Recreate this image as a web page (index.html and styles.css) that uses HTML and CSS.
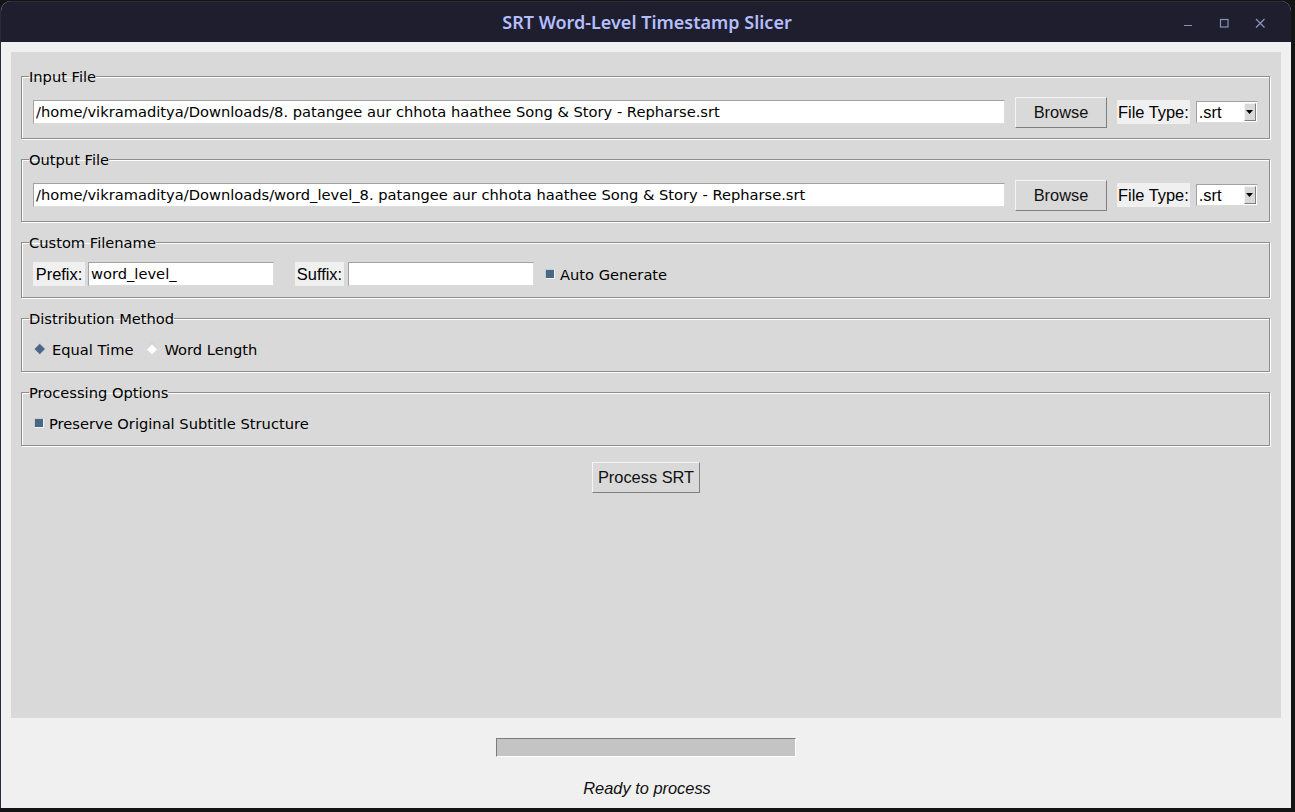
FILE: index.html
```html
<!DOCTYPE html>
<html>
<head>
<meta charset="utf-8">
<title>SRT Word-Level Timestamp Slicer</title>
<link rel="stylesheet" href="styles.css">
</head>
<body>
<div class="window">
  <div class="titlebar">
    <div class="title">SRT Word-Level Timestamp Slicer</div>
    <div class="controls">
      <svg class="ctl" width="12" height="12" viewBox="0 0 12 12"><path d="M2 8.5h8" stroke="#8890b4" stroke-width="1.2"/></svg>
      <svg class="ctl" width="12" height="12" viewBox="0 0 12 12"><rect x="2.5" y="2.5" width="7.5" height="7.5" fill="none" stroke="#8890b4" stroke-width="1.2"/></svg>
      <svg class="ctl" width="12" height="12" viewBox="0 0 12 12"><path d="M2 2l8.5 8.5M10.5 2L2 10.5" stroke="#8890b4" stroke-width="1.3"/></svg>
    </div>
  </div>
  <div class="content">
    <div class="main">
      <fieldset class="group">
        <legend>Input File</legend>
        <div class="row file-row">
          <div class="entry path">/home/vikramaditya/Downloads/8. patangee aur chhota haathee Song &amp; Story - Repharse.srt</div>
          <div class="button browse">Browse</div>
          <div class="tklabel ftype">File Type:</div>
          <div class="combo"><span class="combo-text">.srt</span><span class="combo-arrow"><svg width="7" height="4" viewBox="0 0 7 4"><path d="M0 0h7L3.5 4z" fill="#000"/></svg></span></div>
        </div>
      </fieldset>
      <fieldset class="group">
        <legend>Output File</legend>
        <div class="row file-row">
          <div class="entry path">/home/vikramaditya/Downloads/word_level_8. patangee aur chhota haathee Song &amp; Story - Repharse.srt</div>
          <div class="button browse">Browse</div>
          <div class="tklabel ftype">File Type:</div>
          <div class="combo"><span class="combo-text">.srt</span><span class="combo-arrow"><svg width="7" height="4" viewBox="0 0 7 4"><path d="M0 0h7L3.5 4z" fill="#000"/></svg></span></div>
        </div>
      </fieldset>
      <fieldset class="group compact">
        <legend>Custom Filename</legend>
        <div class="row name-row">
          <div class="tklabel prefix">Prefix:</div>
          <div class="entry short">word_level_</div>
          <div class="tklabel suffix">Suffix:</div>
          <div class="entry short"></div>
          <div class="check auto"><span class="box"></span><span class="check-text">Auto Generate</span></div>
        </div>
      </fieldset>
      <fieldset class="group compact">
        <legend>Distribution Method</legend>
        <div class="row radio-row">
          <div class="radio"><svg width="12" height="12" viewBox="0 0 12 12"><path d="M6 0.5L11.5 6 6 11.5 0.5 6z" fill="#4a6784"/><path d="M6 0.5L11.5 6 6 11.5" fill="none" stroke="#dfe3e8" stroke-width="0.9"/></svg><span>Equal Time</span></div>
          <div class="radio"><svg width="12" height="12" viewBox="0 0 12 12"><path d="M6 0.5L11.5 6 6 11.5 0.5 6z" fill="#ffffff"/><path d="M0.5 6L6 0.5 11.5 6" fill="none" stroke="#bdbdbd" stroke-width="0.9"/></svg><span>Word Length</span></div>
        </div>
      </fieldset>
      <fieldset class="group compact">
        <legend>Processing Options</legend>
        <div class="row radio-row">
          <div class="check preserve"><span class="box"></span><span class="check-text">Preserve Original Subtitle Structure</span></div>
        </div>
      </fieldset>
      <div class="actions">
        <div class="button process">Process SRT</div>
      </div>
    </div>
    <div class="status">
      <div class="progress"></div>
      <div class="status-text">Ready to process</div>
    </div>
  </div>
</div>
</body>
</html>
```
FILE: styles.css
```css
html, body {
  margin: 0;
  padding: 0;
  background: #141414;
  width: 1295px;
  height: 812px;
  overflow: hidden;
}
body {
  padding: 1px 0 0 1px;
  box-sizing: border-box;
}
.window {
  width: 1290px;
  height: 807px;
  border-radius: 10px 10px 0 0;
  overflow: hidden;
  display: flex;
  flex-direction: column;
  background: #f0f0f0;
  box-shadow: -1px 0 0 #262b3e;
}
.titlebar {
  height: 41px;
  flex: none;
  background: #1e1e2e;
  display: flex;
  align-items: center;
  justify-content: center;
  position: relative;
  box-shadow: inset 0 1px 0 #2c2c3c;
}
.title {
  font-family: "Noto Sans", sans-serif;
  font-weight: 600;
  font-size: 18px;
  color: #b4befe;
  margin-left: 2px;
  margin-top: 1px;
}
.controls {
  position: absolute;
  right: 25px;
  top: 16px;
  display: flex;
  gap: 24px;
}
.ctl { display: block; }
.content {
  flex: 1;
  display: flex;
  flex-direction: column;
  padding: 10px 10px 0 10px;
  font-family: "DejaVu Sans", sans-serif;
  font-size: 14.67px;
  color: #000;
}
.main {
  background: #d9d9d9;
  height: 666px;
  padding: 16px 11px 0 10px;
  box-sizing: border-box;
  display: flex;
  flex-direction: column;
}
.group {
  margin: 0 0 12px 0;
  padding: 12px 11px 10px 11px;
  border: 1px solid #8e8e8e;
  box-shadow: 1px 1px 0 #ffffff, inset 1px 1px 0 #ffffff;
  min-width: 0;
}
.group.compact {
  padding-top: 11px;
  padding-bottom: 11px;
}
.group legend {
  padding: 0;
  margin-left: -4px;
  font-family: "DejaVu Sans", sans-serif;
  font-size: 14.67px;
  line-height: 17px;
  color: #000;
}
.row {
  display: flex;
  align-items: center;
}
.file-row {
  height: 31px;
  align-items: flex-start;
}
.file-row .entry,
.file-row .tklabel { margin-top: 3px; }
.file-row .combo { margin-top: 4px; }
.name-row { height: 24px; }
.radio-row { height: 22px; }
.entry {
  background: #fff;
  border: 1px solid;
  border-color: #a2a2a2 #dcdcdc #dcdcdc #a2a2a2;
  box-sizing: border-box;
  height: 24px;
  line-height: 22px;
  padding: 0 2px;
  font-family: "DejaVu Sans", sans-serif;
  font-size: 14.67px;
  white-space: nowrap;
  overflow: hidden;
  flex: none;
}
.path { width: 972px; }
.short { width: 186px; }
.button {
  font-family: "Liberation Sans", Arial, sans-serif;
  font-size: 16.4px;
  color: #111;
  background: #d9d9d9;
  border: 1px solid;
  border-color: #f4f4f4 #7f7f7f #7f7f7f #f4f4f4;
  box-sizing: border-box;
  display: flex;
  align-items: center;
  justify-content: center;
  flex: none;
}
.browse {
  width: 92px;
  height: 31px;
  margin-left: 10px;
}
.tklabel {
  font-family: "Liberation Sans", Arial, sans-serif;
  font-size: 16.4px;
  background: #f0f0f0;
  height: 24px;
  line-height: 24px;
  padding: 0 2px;
  color: #000;
  flex: none;
  text-align: center;
  box-sizing: border-box;
}
.ftype { margin-left: 10px; padding: 0 1px 0 1px; }
.prefix { width: 52px; padding: 0; margin-right: 3px; }
.suffix { width: 49px; padding: 0; margin-left: 21px; margin-right: 4px; }
.combo {
  margin-left: 6px;
  width: 62px;
  height: 22px;
  background: #fff;
  border: 1px solid;
  border-color: #a2a2a2 #dcdcdc #dcdcdc #a2a2a2;
  box-sizing: border-box;
  display: flex;
  align-items: center;
  justify-content: space-between;
  font-family: "Liberation Sans", Arial, sans-serif;
  font-size: 16.4px;
  flex: none;
}
.combo-text { padding-left: 2px; line-height: 20px; }
.combo-arrow {
  width: 12px;
  height: 18px;
  margin-right: 1px;
  background: #d9d9d9;
  border: 1px solid;
  border-color: #f4f4f4 #7f7f7f #7f7f7f #f4f4f4;
  box-sizing: border-box;
  display: flex;
  align-items: center;
  justify-content: center;
}
.combo-arrow svg { display: block; }
.check {
  display: flex;
  align-items: center;
}
.check .box {
  width: 10px;
  height: 10px;
  box-sizing: border-box;
  background: #4a6784;
  border: 1px solid;
  border-color: #c5ccd4 #f2f2f2 #f2f2f2 #c5ccd4;
}
.check-text { margin-left: 5px; }
.auto { margin-left: 11px; }
.auto .check-text { margin-left: 5px; }
.preserve { margin-left: 1px; }
.radio {
  display: flex;
  align-items: center;
  margin-right: 12px;
}
.radio svg { display: block; margin-left: 1px; margin-right: 6px; }
.actions {
  display: flex;
  justify-content: center;
  margin-top: 4px;
}
.process {
  width: 108px;
  height: 31px;
  margin-left: 1px;
}
.status {
  flex: 1;
  display: flex;
  flex-direction: column;
  align-items: center;
  padding-top: 20px;
}
.progress {
  width: 300px;
  height: 19px;
  box-sizing: border-box;
  background: #c4c4c4;
  border: 1px solid;
  border-color: #7c7c7c #ffffff #ffffff #7c7c7c;
}
.status-text {
  margin-top: 22px;
  font-family: "Liberation Sans", Arial, sans-serif;
  font-style: italic;
  font-size: 16.4px;
  line-height: 18px;
  color: #111;
  margin-left: 2px;
}
```
